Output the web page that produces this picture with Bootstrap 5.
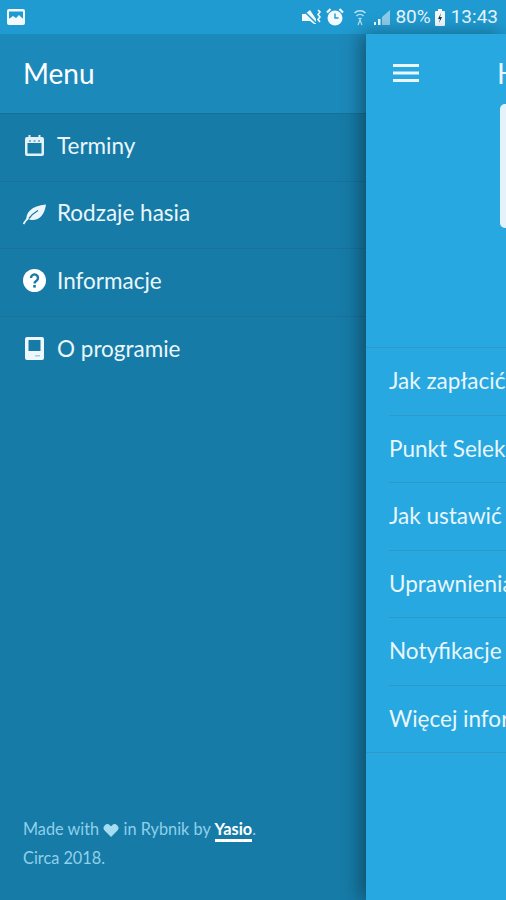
<!DOCTYPE html>
<html lang="pl">
  <head>
    <meta charset="UTF-8" />
    <meta name="viewport" content="width=device-width, initial-scale=1.0" />
    <title>Menu</title>
    <link rel="stylesheet" href="https://cdn.jsdelivr.net/npm/bootstrap@5.3.0/dist/css/bootstrap.min.css" />
    <style>
      html, body { height: 900px; overflow: hidden; }
      body { font-family: Lato, "Liberation Sans", sans-serif; color: #fff; background: #167ba7; }
      .status-bar { height: 34px; background: #1f9bd1; padding: 0 8px 0 7px; }
      .status-bar .status-text { font-family: Roboto, "Liberation Sans", sans-serif; font-size: 19px; line-height: 34px; color: #e6f5fc; }
      .status-icons svg { flex: none; }
      .gap-4px { margin-right: 4px; }
      .gap-5px { margin-right: 5px; }
      .gap-6px { margin-right: 6px; }
      .gap-10px { margin-right: 10px; }
      .app-body { height: 866px; }
      .side-menu { width: 366px; flex: none; background: #167ba7; }
      .side-head { height: 80px; padding: 0 0 2px 23px; background: #1c89bb; border-bottom: 1px solid #14709a; font-size: 28px; }
      .side-menu .list-group-item { height: 67.5px; padding: 0 0 3px 23px; background: transparent; color: #eaf6fb; border-color: #1a7097; font-size: 22.5px; border-bottom: 1px solid #1a7097; }
      .item-icon { width: 23px; height: 23px; margin-right: 11px; flex: none; }
      .side-foot { padding: 0 23px 28px; font-size: 16.3px; line-height: 29px; color: #8fd0ea; }
      .side-foot a { color: #fff; font-weight: 700; text-decoration: none; border-bottom: 3px solid #fff; padding-bottom: 1px; }
      .main-pane { flex: 1 1 0; min-width: 0; overflow: hidden; background: #27a8e1; box-shadow: -5px 0 18px rgba(0, 0, 0, .38); position: relative; }
      .main-head { height: 80px; padding: 0 0 2px 27px; font-size: 28px; color: #eaf6fb; white-space: nowrap; }
      .main-head svg { margin-right: 78px; flex: none; }
      .hero-wrap { height: 244px; border-bottom: 1px solid #3098c6; }
      .hero-box { width: 40px; height: 124px; margin: -10px 0 0 134px; background: #e6f2f9; border-radius: 5px; }
      .main-pane .list-group-item { height: 67.5px; padding: 0 0 0 23px; background: transparent; color: #eaf6fb; font-size: 22.5px; white-space: nowrap; border: 0; }
      .main-pane .list-group-item span { display: flex; align-items: center; height: 100%; border-bottom: 1px solid #3098c6; }
      .main-pane .list-group-item:last-child { padding-left: 0; border-bottom: 1px solid #3098c6; }
      .main-pane .list-group-item:last-child span { border: 0; padding-left: 23px; }
    </style>
  </head>
  <body>
    <div class="status-bar d-flex align-items-center justify-content-between">
      <svg width="18" height="16" viewBox="0 0 18 16"><rect width="18" height="16" rx="2" fill="#f2fafd"/><rect x="2" y="2.500" width="14" height="7" fill="#1f9bd1"/><path d="M2 10l4-3 3 2 3-3 4 4v1H2z" fill="#f2fafd"/></svg>
      <div class="status-icons d-flex align-items-center">
        <svg width="19" height="16" viewBox="0 0 19 16" class="gap-5px"><path d="M0 5h3l5-4 6 9v5h-2L8 12H0z" fill="#f2fafd"/><path d="M1 1l13 13" stroke="#1f9bd1" stroke-width="1.500"/><path d="M16 1l2 2-2 2.500 2 2.500-2 2.500 2 2.500" stroke="#f2fafd" stroke-width="1.600" fill="none"/></svg>
        <svg width="18" height="18" viewBox="0 0 18 18" class="gap-10px"><circle cx="9" cy="10" r="7.500" fill="#f2fafd"/><path d="M9 5.500V10h3.500" stroke="#1f9bd1" stroke-width="1.400" fill="none"/><path d="M1 4.500L4.500 1M17 4.500L13.500 1" stroke="#f2fafd" stroke-width="2.200"/></svg>
        <svg width="12" height="18" viewBox="0 0 12 18" class="me-2"><path d="M.5 5a8 8 0 0 1 11 0M2.500 8a5 5 0 0 1 7 0M4.500 11a2.500 2.500 0 0 1 3 0" stroke="#b9e2f4" stroke-width="1.500" fill="none"/><path d="M4 17l2-5 2 5" stroke="#b9e2f4" stroke-width="1.200" fill="none"/></svg>
        <svg width="16" height="17" viewBox="0 0 16 17" class="gap-5px"><path d="M16 1v15H8V8z" fill="#8ccbe8"/><rect y="13" width="2" height="3" fill="#f2fafd"/><rect x="4" y="10" width="2.500" height="6" fill="#f2fafd"/></svg>
        <span class="status-text gap-4px">80%</span>
        <svg width="10" height="17" viewBox="0 0 10 17" class="gap-6px"><rect x="3" width="4" height="2" fill="#f2fafd"/><rect y="2" width="10" height="15" rx="1" fill="#f2fafd"/><path d="M6 4L3 10h2l-1 4 3-6H5z" fill="#12384a"/></svg>
        <span class="status-text">13:43</span>
      </div>
    </div>

    <div class="app-body d-flex">
      <nav class="side-menu d-flex flex-column">
        <div class="side-head d-flex align-items-center">Menu</div>
        <ul class="list-group list-group-flush">
          <li class="list-group-item d-flex align-items-center">
            <svg class="item-icon" viewBox="0 0 23 23"><path fill="#e3f2f9" fill-rule="evenodd" d="M5.500 1h2v2h8V1h2v2H19a2 2 0 0 1 2 2v15a2 2 0 0 1-2 2H4a2 2 0 0 1-2-2V5a2 2 0 0 1 2-2h1.500zM4.500 9v10.500h14V9z"/><path d="M6 7h2M10.500 7h2M15 7h2" stroke="#167ba7" stroke-width="1"/></svg>
            Terminy
          </li>
          <li class="list-group-item d-flex align-items-center">
            <svg class="item-icon" viewBox="0 0 23 23"><path fill="#eaf6fb" d="M23 2.500C21.500 13 16.500 18.500 8.500 18c-1 0-2-.5-3-1L3.500 19C2 11 8.500 3.500 23 2.500z"/><path d="M.5 22C3.500 17 7.500 12.500 14 9" stroke="#eaf6fb" stroke-width="1.800" fill="none"/><path d="M6 16.500C8.500 13 11.500 10.500 15 8.500" stroke="#167ba7" stroke-width="1.300" fill="none"/></svg>
            Rodzaje hasia
          </li>
          <li class="list-group-item d-flex align-items-center">
            <svg class="item-icon" viewBox="0 0 23 23"><circle cx="11.500" cy="11.500" r="11.500" fill="#fff"/><path d="M8 9a3.500 3.500 0 1 1 5.500 2.800c-1.300.9-2 1.400-2 2.700" stroke="#167ba7" stroke-width="2.400" fill="none"/><rect x="10.200" y="16" width="2.600" height="2.600" fill="#167ba7"/></svg>
            Informacje
          </li>
          <li class="list-group-item d-flex align-items-center">
            <svg class="item-icon" viewBox="0 0 23 23"><path fill="#eef8fc" fill-rule="evenodd" d="M4 0h15a2 2 0 0 1 2 2v19a2 2 0 0 1-2 2H4a2 2 0 0 1-2-2V2a2 2 0 0 1 2-2zm1.500 3v11h12V3z"/><rect x="12" y="18" width="5" height="1.500" fill="#9ccfe4"/></svg>
            O programie
          </li>
        </ul>
        <div class="side-foot mt-auto">
          Made with <svg width="16" height="13" viewBox="0 0 16 14"><path fill="#a5dcf2" d="M8 14L1.300 7.300A4 4 0 0 1 7 1.500l1 1 1-1a4 4 0 0 1 5.700 5.800z"/></svg> in Rybnik by <a href="#">Yasio</a>.<br />
          Circa 2018.
        </div>
      </nav>

      <main class="main-pane">
        <div class="main-head d-flex align-items-center">
          <svg width="26" height="18" viewBox="0 0 26 18"><path d="M0 1.500h26M0 9h26M0 16.500h26" stroke="#eaf6fb" stroke-width="3"/></svg>
          H
        </div>
        <div class="hero-wrap"><div class="hero-box"></div></div>
        <ul class="list-group list-group-flush">
          <li class="list-group-item"><span>Jak zapłacić</span></li>
          <li class="list-group-item"><span>Punkt Selek</span></li>
          <li class="list-group-item"><span>Jak ustawić</span></li>
          <li class="list-group-item"><span>Uprawnienia</span></li>
          <li class="list-group-item"><span>Notyfikacje</span></li>
          <li class="list-group-item"><span>Więcej infor</span></li>
        </ul>
      </main>
    </div>

    <script src="https://cdn.jsdelivr.net/npm/bootstrap@5.3.0/dist/js/bootstrap.bundle.min.js"></script>
  </body>
</html>
